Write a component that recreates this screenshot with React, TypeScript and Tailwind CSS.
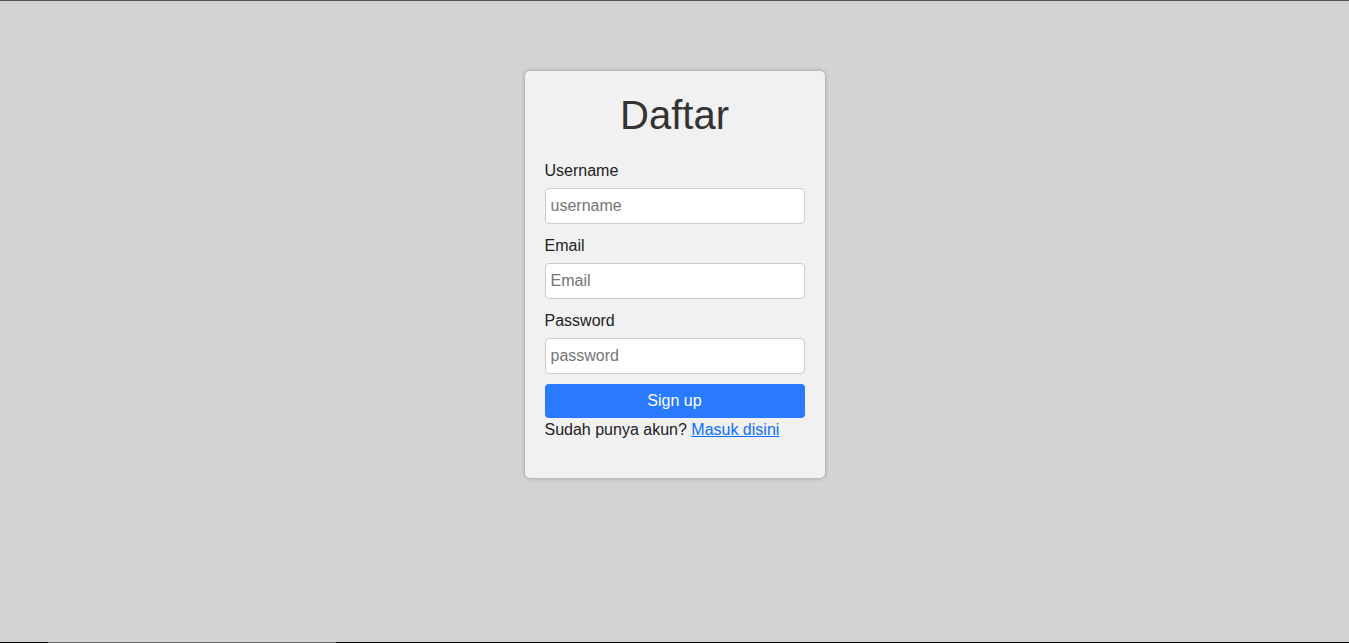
import React from "react";

export default function App() {
  return (
    <div
      className="min-h-[643px] h-[643px] bg-[#d3d3d3] border-t border-t-[#555555] flex flex-col items-center pt-[70px] relative"
      style={{ fontFamily: '"Liberation Sans", Arial, sans-serif' }}
    >
      <div className="w-[300px] bg-[#f1f1f1] rounded-[5px] shadow-[0_0_4px_rgba(0,0,0,0.3)] px-5 pt-5 pb-9 text-[#222]">
        <h1 className="text-[40px] leading-[48px] text-center text-[#333] mb-[20px]">Daftar</h1>
        <form onSubmit={(e) => e.preventDefault()}>
          <label className="block text-base leading-6 mb-[5px]">Username</label>
          <input
            type="text"
            placeholder="username"
            className="block w-full h-9 px-[5px] bg-white border border-[#cccccc] rounded-[4px] text-base placeholder:text-[#757575] mb-[9px] outline-none"
          />
          <label className="block text-base leading-6 mb-[5px] pt-px">Email</label>
          <input
            type="email"
            placeholder="Email"
            className="block w-full h-9 px-[5px] bg-white border border-[#cccccc] rounded-[4px] text-base placeholder:text-[#757575] mb-[9px] outline-none"
          />
          <label className="block text-base leading-6 mb-[5px] pt-px">Password</label>
          <input
            type="password"
            placeholder="password"
            className="block w-full h-9 px-[5px] bg-white border border-[#cccccc] rounded-[4px] text-base placeholder:text-[#757575] mb-[10px] outline-none"
          />
          <button
            type="submit"
            className="block w-full h-[34px] bg-[#2a7aff] text-white text-base rounded-[4px]"
          >
            Sign up
          </button>
          <p className="text-base leading-6">
            Sudah punya akun?{" "}
            <a href="#" className="text-[#0d6efd] underline">
              Masuk disini
            </a>
          </p>
        </form>
      </div>
      <div className="absolute left-0 right-0 bottom-0 h-px bg-[#666666]">
        <div className="absolute left-0 top-0 w-12 h-px bg-black" />
        <div className="absolute left-[336px] top-0 right-0 h-px bg-black" />
      </div>
    </div>
  );
}
